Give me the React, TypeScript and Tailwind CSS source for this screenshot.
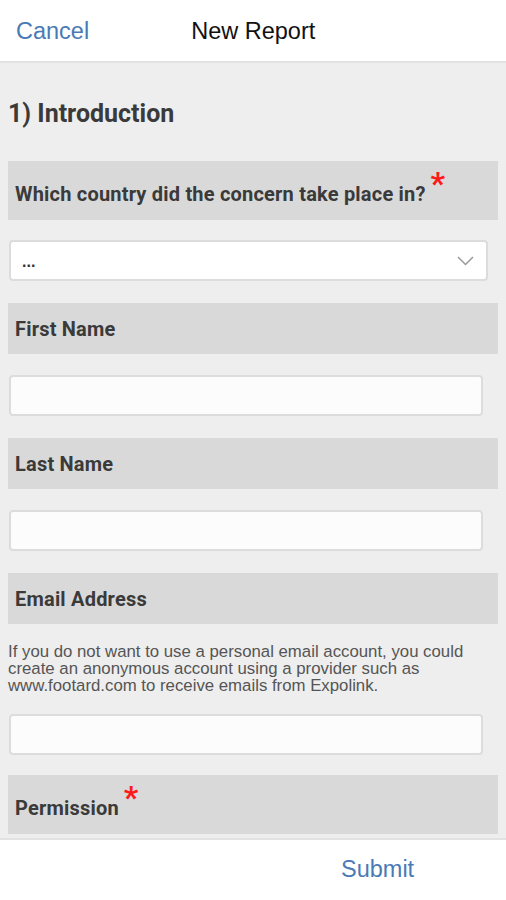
import React from 'react';

const labelFont = { fontFamily: 'Roboto, "Liberation Sans", sans-serif' };

function Label({ text, required, tall }: { text: string; required?: boolean; tall?: boolean }) {
  return (
    <div
      className={`bg-[#d9d9d9] flex items-center px-[7px] text-[20px] tracking-[0.2px] font-bold text-[#3a3a3a] ${tall ? 'h-[59px] pt-[6px]' : 'h-[51px]'}`}
      style={labelFont}
    >
      <span>{text}</span>
      {required && <span className="text-[#ff1a1a] text-[32px] leading-none relative -top-[11px] ml-[5px]">*</span>}
    </div>
  );
}

function TextInput() {
  return <div className="mt-[21px] h-[41px] w-[474px] ml-px bg-[#fcfcfc] border-2 border-[#dcdcdc] rounded-[4px]" />;
}

export default function App() {
  return (
    <div className="h-[900px] flex flex-col bg-white" style={{ fontFamily: '"Liberation Sans", Arial, sans-serif' }}>
      {/* Header */}
      <div className="h-[63px] shrink-0 border-b-2 border-[#e2e2e2] flex items-center text-[23.5px] pt-[3px]">
        <span className="ml-[16px] text-[#4a7ab5]">Cancel</span>
        <span className="ml-[102px] text-[#111]">New Report</span>
      </div>

      {/* Form */}
      <div className="flex-1 bg-[#eeeeee] px-2 overflow-hidden">
        <h1 className="pt-[38px] mb-[34px] text-[25px] leading-[26px] font-bold text-[#3a3a3a]" style={labelFont}>
          1) Introduction
        </h1>

        <Label text="Which country did the concern take place in?" required tall />

        <div className="mt-[20px] h-[41px] w-[479px] ml-px bg-white border-2 border-[#dcdcdc] rounded-[4px] flex items-center justify-between pl-[11px] pr-[12px]">
          <span className="text-[16px] font-bold text-[#333] mt-[2px]">...</span>
          <svg width="17" height="10" viewBox="0 0 17 10" fill="none">
            <polyline points="1,1 8.5,8.5 16,1" stroke="#9a9a9a" strokeWidth="1.5" />
          </svg>
        </div>

        <div className="mt-[22px]">
          <Label text="First Name" />
        </div>
        <TextInput />

        <div className="mt-[22px]">
          <Label text="Last Name" />
        </div>
        <TextInput />

        <div className="mt-[22px]">
          <Label text="Email Address" />
        </div>
        <p className="mt-[19px] text-[16.8px] leading-[17px] text-[#555]">
          If you do not want to use a personal email account, you could create an anonymous account using a provider such as www.footard.com to receive emails from Expolink.
        </p>
        <div className="-mt-px">
          <TextInput />
        </div>

        <div className="mt-[20px]">
          <Label text="Permission" required tall />
        </div>
      </div>

      {/* Footer */}
      <div className="h-[62px] shrink-0 border-t-2 border-[#e2e2e2] bg-white flex items-center">
        <span className="ml-[341px] text-[23.5px] text-[#4a7ab5]">Submit</span>
      </div>
    </div>
  );
}
